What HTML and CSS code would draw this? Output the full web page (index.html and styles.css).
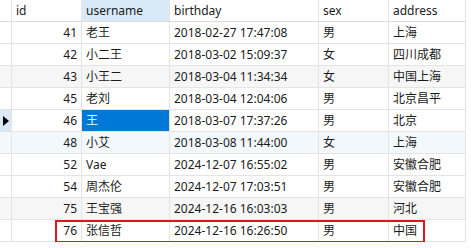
FILE: index.html
```html
<!DOCTYPE html>
<html lang="zh-CN">
<head>
  <meta charset="UTF-8" />
  <title>user</title>
  <link rel="stylesheet" href="styles.css">
</head>
<body>

  <div class="grid">
    <div class="row head">
      <div class="cell mark"></div>
      <div class="cell">id</div>
      <div class="cell active-col">username</div>
      <div class="cell">birthday</div>
      <div class="cell">sex</div>
      <div class="cell">address</div>
    </div>

    <div class="row">
      <div class="cell mark"></div>
      <div class="cell num">41</div>
      <div class="cell">老王</div>
      <div class="cell">2018-02-27 17:47:08</div>
      <div class="cell">男</div>
      <div class="cell">上海</div>
    </div>
    <div class="row">
      <div class="cell mark"></div>
      <div class="cell num">42</div>
      <div class="cell">小二王</div>
      <div class="cell">2018-03-02 15:09:37</div>
      <div class="cell">女</div>
      <div class="cell">四川成都</div>
    </div>
    <div class="row gray">
      <div class="cell mark"></div>
      <div class="cell num">43</div>
      <div class="cell">小王二</div>
      <div class="cell">2018-03-04 11:34:34</div>
      <div class="cell">女</div>
      <div class="cell">中国上海</div>
    </div>
    <div class="row">
      <div class="cell mark"></div>
      <div class="cell num">45</div>
      <div class="cell">老刘</div>
      <div class="cell">2018-03-04 12:04:06</div>
      <div class="cell">男</div>
      <div class="cell">北京昌平</div>
    </div>
    <div class="row current">
      <div class="cell mark"><span class="arrow"></span></div>
      <div class="cell num">46</div>
      <div class="cell selected">王</div>
      <div class="cell">2018-03-07 17:37:26</div>
      <div class="cell">男</div>
      <div class="cell">北京</div>
    </div>
    <div class="row blue">
      <div class="cell mark"></div>
      <div class="cell num">48</div>
      <div class="cell">小艾</div>
      <div class="cell">2018-03-08 11:44:00</div>
      <div class="cell">女</div>
      <div class="cell">上海</div>
    </div>
    <div class="row">
      <div class="cell mark"></div>
      <div class="cell num">52</div>
      <div class="cell">Vae</div>
      <div class="cell">2024-12-07 16:55:02</div>
      <div class="cell">男</div>
      <div class="cell">安徽合肥</div>
    </div>
    <div class="row">
      <div class="cell mark"></div>
      <div class="cell num">54</div>
      <div class="cell">周杰伦</div>
      <div class="cell">2024-12-07 17:03:51</div>
      <div class="cell">男</div>
      <div class="cell">安徽合肥</div>
    </div>
    <div class="row gray">
      <div class="cell mark"></div>
      <div class="cell num">75</div>
      <div class="cell">王宝强</div>
      <div class="cell">2024-12-16 16:03:03</div>
      <div class="cell">男</div>
      <div class="cell">河北</div>
    </div>
    <div class="row">
      <div class="cell mark"></div>
      <div class="cell num">76</div>
      <div class="cell">张信哲</div>
      <div class="cell">2024-12-16 16:26:50</div>
      <div class="cell">男</div>
      <div class="cell">中国</div>
    </div>

    <!-- 标注新插入的记录 -->
    <div class="highlight-box"></div>
  </div>

</body>
</html>
```

FILE: styles.css
```css
body {
  margin: 0;
  background-color: #ffffff;
  font-family: "Noto Sans", "Noto Sans CJK SC", sans-serif;
  font-size: 12px;
  color: #1b1b1b;
}

.grid {
  position: relative;
  width: 466px;
}

.row {
  display: grid;
  grid-template-columns: 12px 70px 88px 149px 70px 77px;
  height: 22px;
}

.cell {
  box-sizing: border-box;
  height: 22px;
  line-height: 21px;
  padding: 0 4px;
  border-right: 1px solid #e4e4e4;
  border-bottom: 1px solid #e4e4e4;
  white-space: nowrap;
  overflow: hidden;
}

.head .cell {
  border-bottom-color: #dcdcdc;
  background-color: #ffffff;
}

.head .cell.active-col {
  background-color: #d9e9f8;
}

.cell.mark {
  padding: 0;
  position: relative;
}

.cell.num {
  text-align: right;
}

.row.gray .cell {
  background-color: #f6f6f6;
}

.row.blue .cell {
  background-color: #f3f8fd;
}

.row.current .cell.mark {
  background-color: #dbe8f6;
}

.cell.selected {
  background-color: #0078d7;
  color: #ffffff;
}

.arrow {
  position: absolute;
  left: 3px;
  top: 6px;
  width: 0;
  height: 0;
  border-top: 5px solid transparent;
  border-bottom: 5px solid transparent;
  border-left: 6px solid #000000;
}

.highlight-box {
  position: absolute;
  left: 55px;
  top: 220px;
  width: 370px;
  height: 23px;
  box-sizing: border-box;
  border: 2px solid #e0151f;
}
```
